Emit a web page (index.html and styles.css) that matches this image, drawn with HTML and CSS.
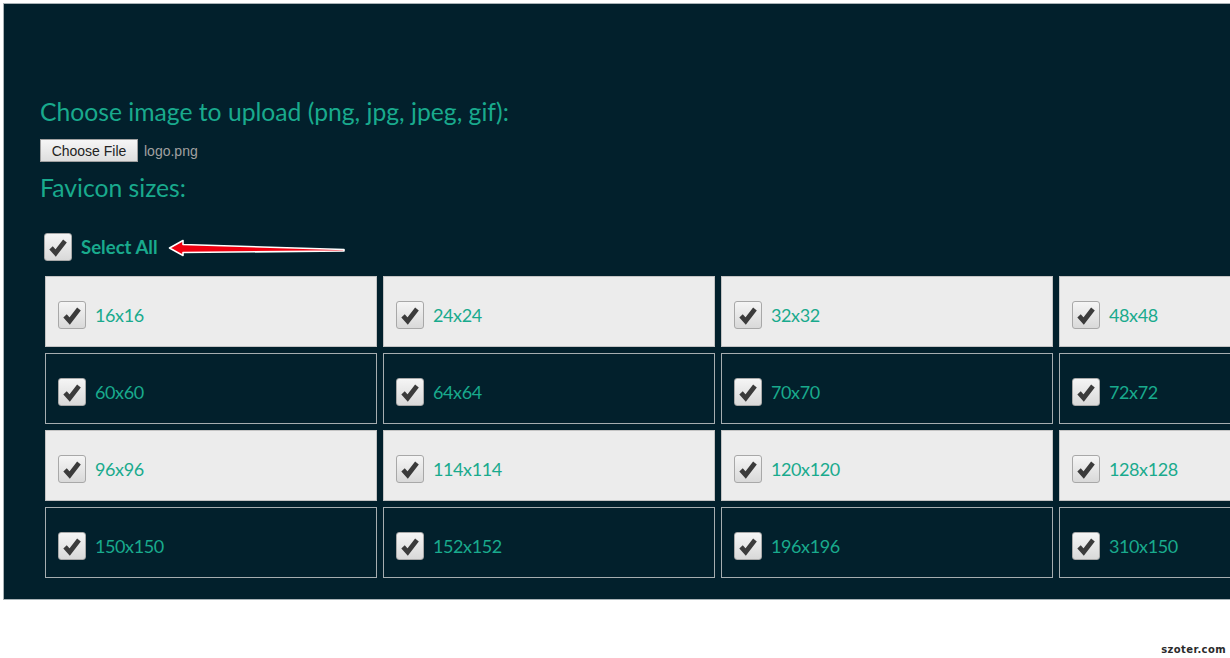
FILE: index.html
```html
<!DOCTYPE html>
<html lang="en">
  <head>
    <meta charset="UTF-8" />
    <meta name="viewport" content="width=device-width, initial-scale=1.0" />
    <title>Favicon Generator</title>
    <link rel="stylesheet" href="styles.css">
  </head>
  <body>
    <div class="panel">
      <h2 class="title">Choose image to upload (png, jpg, jpeg, gif):</h2>
      <div class="file-row">
        <button class="file-button">Choose File</button>
        <span class="file-name">logo.png</span>
      </div>
      <h2 class="title sizes-title">Favicon sizes:</h2>

      <div class="select-all">
        <span class="check">
          <svg viewBox="0 0 28 28"><path d="M6.5 15 L11.5 20.5 L21.5 7.5" /></svg>
        </span>
        <span class="select-label">Select All</span>
        <svg class="arrow" viewBox="0 0 180 22">
          <path d="M1.5 11 L15 3.5 L15 7.5 L176 12.5 L176 14 L15 15.5 L15 18.5 Z" />
        </svg>
      </div>

      <div class="sizes">
        <div class="size light"><span class="check"><svg viewBox="0 0 28 28"><path d="M6.5 15 L11.5 20.5 L21.5 7.5" /></svg></span><span class="size-label">16x16</span></div>
        <div class="size light"><span class="check"><svg viewBox="0 0 28 28"><path d="M6.5 15 L11.5 20.5 L21.5 7.5" /></svg></span><span class="size-label">24x24</span></div>
        <div class="size light"><span class="check"><svg viewBox="0 0 28 28"><path d="M6.5 15 L11.5 20.5 L21.5 7.5" /></svg></span><span class="size-label">32x32</span></div>
        <div class="size light"><span class="check"><svg viewBox="0 0 28 28"><path d="M6.5 15 L11.5 20.5 L21.5 7.5" /></svg></span><span class="size-label">48x48</span></div>

        <div class="size dark"><span class="check"><svg viewBox="0 0 28 28"><path d="M6.5 15 L11.5 20.5 L21.5 7.5" /></svg></span><span class="size-label">60x60</span></div>
        <div class="size dark"><span class="check"><svg viewBox="0 0 28 28"><path d="M6.5 15 L11.5 20.5 L21.5 7.5" /></svg></span><span class="size-label">64x64</span></div>
        <div class="size dark"><span class="check"><svg viewBox="0 0 28 28"><path d="M6.5 15 L11.5 20.5 L21.5 7.5" /></svg></span><span class="size-label">70x70</span></div>
        <div class="size dark"><span class="check"><svg viewBox="0 0 28 28"><path d="M6.5 15 L11.5 20.5 L21.5 7.5" /></svg></span><span class="size-label">72x72</span></div>

        <div class="size light"><span class="check"><svg viewBox="0 0 28 28"><path d="M6.5 15 L11.5 20.5 L21.5 7.5" /></svg></span><span class="size-label">96x96</span></div>
        <div class="size light"><span class="check"><svg viewBox="0 0 28 28"><path d="M6.5 15 L11.5 20.5 L21.5 7.5" /></svg></span><span class="size-label">114x114</span></div>
        <div class="size light"><span class="check"><svg viewBox="0 0 28 28"><path d="M6.5 15 L11.5 20.5 L21.5 7.5" /></svg></span><span class="size-label">120x120</span></div>
        <div class="size light"><span class="check"><svg viewBox="0 0 28 28"><path d="M6.5 15 L11.5 20.5 L21.5 7.5" /></svg></span><span class="size-label">128x128</span></div>

        <div class="size dark"><span class="check"><svg viewBox="0 0 28 28"><path d="M6.5 15 L11.5 20.5 L21.5 7.5" /></svg></span><span class="size-label">150x150</span></div>
        <div class="size dark"><span class="check"><svg viewBox="0 0 28 28"><path d="M6.5 15 L11.5 20.5 L21.5 7.5" /></svg></span><span class="size-label">152x152</span></div>
        <div class="size dark"><span class="check"><svg viewBox="0 0 28 28"><path d="M6.5 15 L11.5 20.5 L21.5 7.5" /></svg></span><span class="size-label">196x196</span></div>
        <div class="size dark"><span class="check"><svg viewBox="0 0 28 28"><path d="M6.5 15 L11.5 20.5 L21.5 7.5" /></svg></span><span class="size-label">310x150</span></div>
      </div>
    </div>

    <div class="watermark">szoter.com</div>
  </body>
</html>
```

FILE: styles.css
```css
html,
body {
  margin: 0;
  background: #ffffff;
  overflow: hidden;
  height: 100%;
}

body {
  position: relative;
  font-family: Lato, "Open Sans", sans-serif;
}

.panel {
  margin: 3px 0 0 3px;
  width: 1300px;
  height: 597px;
  box-sizing: border-box;
  background: #02202c;
  border: 1px solid #a9b3b7;
  border-right: none;
  padding: 93px 0 0 36px;
}

.title {
  margin: 0;
  font-size: 24.7px;
  font-weight: normal;
  line-height: 30px;
  color: #19aa8d;
}

.sizes-title {
  margin-top: 11px;
}

.file-row {
  display: flex;
  align-items: center;
  margin-top: 12px;
  font-family: "Liberation Sans", Arial, sans-serif;
  font-size: 14px;
}

.file-button {
  height: 23px;
  width: 98px;
  padding: 0;
  border: 1px solid #a0a0a0;
  border-radius: 0;
  background: linear-gradient(#f6f6f6, #dedede);
  font-family: "Liberation Sans", Arial, sans-serif;
  font-size: 14px;
  color: #222;
}

.file-name {
  margin-left: 6px;
  color: #a0a0a0;
}

.select-all {
  position: relative;
  display: flex;
  align-items: center;
  margin: 30px 0 0 4px;
  height: 28px;
}

.select-label {
  margin-left: 9px;
  font-size: 18.6px;
  font-weight: bold;
  color: #19aa8d;
}

.arrow {
  position: absolute;
  left: 124px;
  top: 4px;
  width: 180px;
  height: 22px;
}

.arrow path {
  fill: #f00010;
  stroke: #ffffff;
  stroke-width: 1.6;
  stroke-linejoin: round;
}

.check {
  display: inline-flex;
  width: 26px;
  height: 26px;
  flex: none;
  border: 1px solid #a8a8a8;
  border-radius: 3px;
  background: linear-gradient(#f5f5f5, #d9d9d9);
}

.check svg {
  width: 26px;
  height: 26px;
}

.check path {
  fill: none;
  stroke: #3b3b3b;
  stroke-width: 5;
  stroke-linecap: butt;
  stroke-linejoin: miter;
}

.sizes {
  display: grid;
  grid-template-columns: repeat(4, 332px);
  grid-auto-rows: 71px;
  column-gap: 6px;
  row-gap: 6px;
  margin: 15px 0 0 5px;
}

.size {
  display: flex;
  align-items: center;
  box-sizing: border-box;
  padding: 6px 0 0 12px;
}

.size.light {
  background: #ececec;
  border: 1px solid #c4c4c4;
}

.size.dark {
  background: #02202c;
  border: 1px solid #a6adb0;
}

.size-label {
  margin-left: 9px;
  font-size: 18px;
  letter-spacing: -0.4px;
  color: #19aa8d;
}

.watermark {
  position: absolute;
  right: 4px;
  top: 644px;
  font-family: "DejaVu Sans", sans-serif;
  font-weight: bold;
  font-size: 10px;
  letter-spacing: 0.4px;
  color: #2a2a2a;
}
```
